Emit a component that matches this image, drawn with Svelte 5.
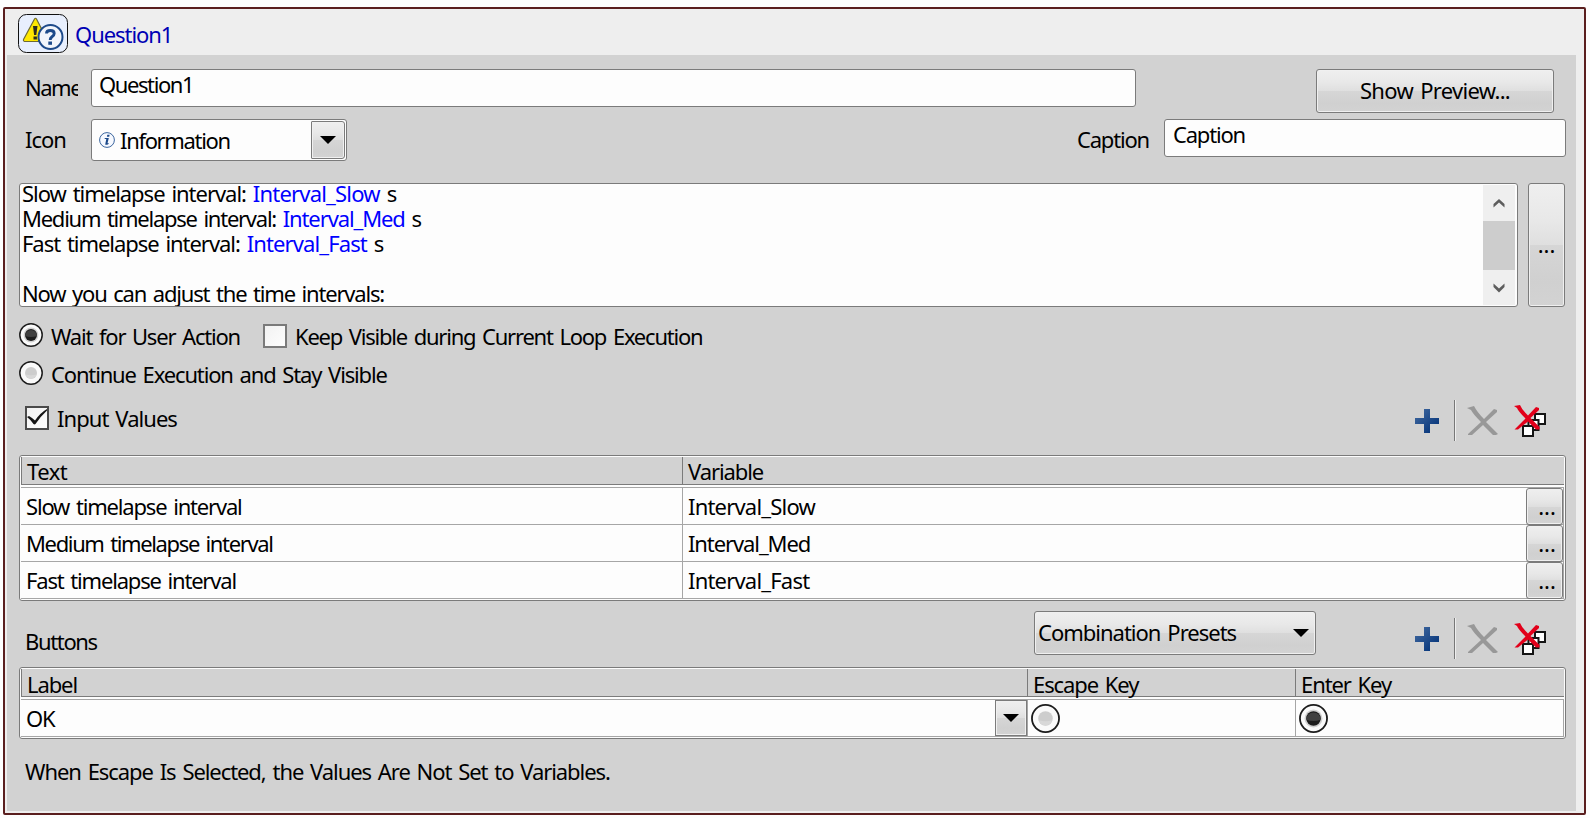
<script>
  const messages = [
    { label: 'Slow timelapse interval: ', variable: 'Interval_Slow', unit: ' s', track: [-1.03, -0.8] },
    { label: 'Medium timelapse interval: ', variable: 'Interval_Med', unit: ' s', track: [-1.25, -1.1] },
    { label: 'Fast timelapse interval: ', variable: 'Interval_Fast', unit: ' s', track: [-1.05, -0.88] }
  ];
  const inputs = [
    { text: 'Slow timelapse interval', variable: 'Interval_Slow', track: [-1.18, -0.8] },
    { text: 'Medium timelapse interval', variable: 'Interval_Med', track: [-1.36, -1.1] },
    { text: 'Fast timelapse interval', variable: 'Interval_Fast', track: [-1.18, -0.8] }
  ];
</script>

{#snippet arrow()}
  <svg class="arrow" width="16" height="8" viewBox="0 0 16 8"><path d="M0 0H16L8 8Z" fill="#000" /></svg>
{/snippet}

{#snippet radio(size, on)}
  <svg class="radio" width={size} height={size} viewBox="0 0 24 24">
    <circle cx="12" cy="12" r="11.2" fill="#fafafa" stroke="#1c1c1c" stroke-width="1.5" />
    {#if on}
      <circle cx="12" cy="12" r="7.4" fill="#d0d0d0" />
      <circle cx="12" cy="12" r="6" fill="#1c1c1c" />
      <path d="M6 13a6 6 0 1 1 12 0q-6 2-12 0z" fill="#404040" />
    {:else}
      <circle cx="12" cy="12" r="6" fill="#cdcdcd" />
      <path d="M6.3 13.5a6 6 0 0 0 11.4 0q-5.700 1.500-11.400 0z" fill="#d8d8d8" />
    {/if}
  </svg>
{/snippet}

{#snippet tools()}
  <div class="tools">
    <svg width="24" height="24" viewBox="0 0 24 24">
      <defs>
        <linearGradient id="plus" x1="0" y1="0" x2="1" y2="1">
          <stop offset="0.2" stop-color="#365f98" /><stop offset="0.8" stop-color="#0b3a7e" />
        </linearGradient>
      </defs>
      <path d="M9 0h6v9h9v6h-9v9H9v-9H0V9h9z" fill="url(#plus)" />
    </svg>
    <i></i>
    <svg class="cross" width="32" height="30" viewBox="0 0 32 30">
      <path d="M0 2L7 0Q10 6 17 13L27 3L30 4V6L19 16L31 28L29 29H26L16 19L5 29H1V28L14 16Q6 8 4 4Z" fill="#989898" />
    </svg>
    <svg class="all" width="33" height="33" viewBox="0 0 33 33">
      <g fill="#fff" stroke="#151515" stroke-width="2">
        <path d="M21 9h10v10H21z" /><path d="M14.500 15h10v10h-10z" /><path d="M9 21h10v10H9z" />
      </g>
      <path d="M0 1L6 0Q8 5 14 10.500L22 2L25 3V5L16.500 13L25.500 22V24.500H22L14 16.500L4 24.500H0.500L11.500 13.500Q4 6 3 3Z" fill="#e2001a" />
    </svg>
  </div>
{/snippet}

<div class="frame">
  <header>
    <svg width="50" height="39" viewBox="0 0 50 39">
      <rect x=".5" y=".5" width="49" height="38" rx="8" fill="#e8effd" stroke="#111" />
      <path d="M16.500 5Q17.500 3.500 18.500 5L29 25.500Q29 27.500 27.500 27.500H6.500Q5 27 5.500 25.500Z" fill="#ffe800" stroke="#6d6a35" stroke-width="1.200" />
      <path d="M15 12h4.500l-1.200 9h-2.200zM15.500 22.500h3.400v3h-3.400z" fill="#2c2c20" />
      <circle cx="32.500" cy="23" r="12" fill="#f2f5fb" stroke="#1d4a8a" stroke-width="2" />
      <path d="M28.500 19.500Q28.500 16.500 32.300 16.500Q36.200 16.500 36.200 19.500Q36.200 21.300 34 22.700Q32.200 24 32.200 26" fill="none" stroke="#1d4a8a" stroke-width="2.900" />
      <rect x="30.300" y="27.500" width="3.700" height="3.300" fill="#1d4a8a" />
    </svg>
    <span>Question1</span>
  </header>

  <main>
    <section class="row name-row">
      <label class="lead" for="name"><span>Name</span></label>
      <div class="field name" id="name">Question1</div>
      <button class="btn preview">Show Preview...</button>
    </section>

    <section class="row icon-row">
      <span class="lead">Icon</span>
      <div class="combo">
        <svg width="16" height="16" viewBox="0 0 16 16">
          <circle cx="8" cy="8" r="7.400" fill="#f6f9ff" stroke="#3b659e" />
          <path d="M8.300 2.800h2.300l-.4 2H7.900zM5.800 6h4l-1.300 5.200 1.200-.3-.2 1Q7.500 13.200 6.200 12.500L7.300 7.100H5.600z" fill="#1d4a8a" />
        </svg>
        <span>Information</span>
        <button class="btn drop">{@render arrow()}</button>
      </div>
      <span class="cap">Caption</span>
      <div class="field caption">Caption</div>
    </section>

    <section class="row message-row">
      <div class="message">
        <div class="lines">
          {#each messages as m}
            <p style:letter-spacing="{m.track[0]}px">{m.label}<b style:letter-spacing="{m.track[1]}px">{m.variable}</b>{m.unit}</p>
          {/each}
          <p>&nbsp;</p>
          <p class="now">Now you can adjust the time intervals:</p>
        </div>
        <div class="scroll">
          <svg width="12" height="10" viewBox="0 0 12 10"><path d="M.5 8.500V5L6 0l5.500 5v3.500L6 3.500z" fill="#5d5d5d" /></svg>
          <div class="thumb"></div>
          <svg width="12" height="10" viewBox="0 0 12 10"><path d="M.5 .5v3.500L6 9.500 11.500 4V.5L6 5.500z" fill="#5d5d5d" /></svg>
        </div>
      </div>
      <button class="btn more">...</button>
    </section>

    <section class="row wait-row">
      {@render radio(24, true)}<span class="wait">Wait for User Action</span>
      <span class="box"></span><span class="keep">Keep Visible during Current Loop Execution</span>
    </section>
    <section class="row stay-row">
      {@render radio(24, false)}<span>Continue Execution and Stay Visible</span>
    </section>

    <section class="row values-row">
      <span class="box checked">
        <svg width="20" height="20" viewBox="0 0 20 20"><path d="M0 9l2-1q3 1.500 6 4.500Q13 5 20 1v1.500Q13 9 8.500 16q-1 .8-2 0Q4 12 0 9z" fill="#161616" /></svg>
      </span>
      <span class="input-values">Input Values</span>
      {@render tools()}
    </section>

    <div class="table values">
      <div class="thead"><span class="text">Text</span><span>Variable</span></div>
      {#each inputs as r}
        <div class="tr">
          <span style:letter-spacing="{r.track[0]}px">{r.text}</span>
          <span style:letter-spacing="{r.track[1]}px">{r.variable}</span>
          <button class="btn dots">...</button>
        </div>
      {/each}
    </div>

    <section class="row buttons-row">
      <span class="title">Buttons</span>
      <button class="btn presets"><span>Combination Presets</span>{@render arrow()}</button>
      {@render tools()}
    </section>

    <div class="table keys">
      <div class="thead"><span>Label</span><span>Escape Key</span><span>Enter Key</span></div>
      <div class="tr">
        <span class="ok">OK<button class="btn pick">{@render arrow()}</button></span>
        <span>{@render radio(29, false)}</span>
        <span>{@render radio(29, true)}</span>
      </div>
    </div>

    <p class="note">When Escape Is Selected, the Values Are Not Set to Variables.</p>
  </main>
</div>

<style>
  :global(body) { background: #fdfdfd; overflow: hidden; }
  * { box-sizing: border-box; }
  .frame {
    width: 1583px; height: 808px; margin: 7px 0 0 3px;
    border: 2px solid #5a1e1e; border-radius: 2px; background: #eee;
    font: 22px/30px "Noto Sans", sans-serif; letter-spacing: -1.1px; word-spacing: 2.2px; color: #000;
    white-space: nowrap;
  }
  svg { display: block; flex: none; }
  p { margin: 0; }
  button { font: inherit; letter-spacing: inherit; word-spacing: inherit; color: inherit; padding: 0; flex: none; }
  header { height: 46px; padding: 5px 0 0 13px; display: flex; }
  header span { margin: 5px 0 0 7px; color: #0000b4; letter-spacing: -1.05px; }
  main { width: 1569px; height: 756px; margin-left: 2px; padding: 14px 10px 0 12px; background: #d2d2d2; }
  .row { display: flex; align-items: flex-start; }
  .btn {
    border: 1px solid #7b7b7b; border-radius: 3px;
    background: linear-gradient(#efefef, #e8e8e8 30%, #dfdfdf 50%, #d6d6d6 50%, #d0d0d0 80%, #d3d3d3);
    box-shadow: inset 0 0 0 1px #f0f0f0;
  }
  .field {
    height: 38px; padding: 0 7px; border: 1px solid #7b7b7b; border-radius: 3px; background: #fdfdfd;
    line-height: 28px; letter-spacing: -1.2px;
  }
  .lead { width: 72px; padding-left: 6px; flex: none; }
  .name-row { height: 50px; }
  .name-row .lead { padding-top: 3px; }
  .lead span { display: block; width: 53px; overflow: hidden; letter-spacing: -1.5px; }
  .name { width: 1045px; letter-spacing: -1.4px; }
  .preview { width: 238px; height: 44px; margin-left: 180px; letter-spacing: -0.7px; padding-bottom: 2px; }
  .icon-row { height: 64px; }
  .icon-row .lead { padding-top: 5px; letter-spacing: -1px; }
  .combo {
    width: 256px; height: 42px; display: flex; align-items: center; padding: 0 1px 0 7px;
    border: 1px solid #7b7b7b; border-radius: 3px; background: #fdfdfd;
  }
  .combo span { margin: -1px auto 0 5px; letter-spacing: -1.33px; }
  .drop { width: 34px; height: 38px; display: grid; place-items: center; border-radius: 1px 3px 3px 1px; }
  .cap { margin: 5px 0 0 730px; width: 87px; letter-spacing: -1.2px; }
  .field.caption { width: 402px; padding-left: 8px; }
  .message-row { height: 140px; }
  .message {
    width: 1499px; height: 124px; display: flex; border: 1px solid #7b7b7b; border-radius: 3px;
    background: #fdfdfd; padding: 1px 2px 1px 2px;
  }
  .lines { flex: 1; overflow: hidden; line-height: 25px; margin-top: -4px; height: 125px; }
  .lines b { font-weight: 400; color: #00f; }
  .now { letter-spacing: -1.2px; }
  .scroll { width: 32px; height: 120px; background: #efefef; display: flex; flex-direction: column; align-items: center; padding: 14px 0 12px; }
  .thumb { width: 32px; height: 49px; margin: 12px 0 13px; background: #cdcdcd; flex: none; }
  .more { width: 37px; height: 124px; margin-left: 10px; letter-spacing: 0; padding-bottom: 2px; }
  .wait-row { height: 38px; }
  .radio + span { margin: -2px 0 0 8px; letter-spacing: -1.15px; }
  .wait-row .radio + span { width: 212px; letter-spacing: -1.2px; }
  .box {
    width: 24px; height: 24px; border: 2px solid #7a7a7a; flex: none;
    background: linear-gradient(135deg, #f2f2f2, #fdfdfd);
  }
  .wait-row .box { margin-top: 1px; }
  .stay-row { height: 44px; }
  .values-row { height: 50px; padding-left: 6px; }
  .box.checked { margin-top: 1px; border-color: #4a4a4a; }
  .box + span { margin-left: 8px; margin-top: -2px; }
  .keep { letter-spacing: -1.22px; }
  .input-values { letter-spacing: -0.95px; }
  .tools { display: flex; margin-left: auto; width: 151px; height: 42px; flex: none; }
  .values-row .tools { margin-top: -5px; }
  .tools > svg:first-child { margin-top: 9px; }
  .tools i { width: 2px; height: 41px; margin-left: 15px; border-left: 1px solid #777; border-right: 1px solid #eee; }
  .cross { margin: 6px 0 0 11px; }
  .all { margin: 5px 0 0 15px; }
  .table { width: 1547px; border: 1px solid #7b7b7b; border-radius: 3px; background: #fdfdfd; padding: 1px 1px 0; }
  .values { height: 146px; }
  .thead { height: 28px; display: flex; background: #d2d2d2; border-bottom: 1px solid #7b7b7b; border-left: 1px solid #7b7b7b; }
  .thead span + span { border-left: 1px solid #7b7b7b; }
  .thead span { padding-left: 5px; line-height: 30px; height: 27px; }
  .thead .text { letter-spacing: -0.5px; }
  .values .thead span { line-height: 28px; }
  .tr { height: 37px; display: flex; border-top: 1px solid #a6a6a6; border-right: 1px solid #a6a6a6; }
  .thead + .tr { margin-top: 2px; }
  .tr:last-child { height: 38px; border-bottom: 1px solid #a6a6a6; }
  .tr > span { padding: 3px 0 0 5px; }
  .tr > span + span { border-left: 1px solid #a6a6a6; }
  .values .tr span:first-child { width: 661px; }
  .values .thead span:first-child { width: 660px; }
  .values .thead span:nth-child(2) { flex: 1; }
  .values .tr span:nth-child(2) { flex: 1; }
  .dots { width: 37px; height: 37px; padding: 0 0 2px 5px; letter-spacing: 0; }
  .buttons-row { height: 66px; padding-top: 10px; }
  .title { width: 1015px; padding: 15px 0 0 6px; letter-spacing: -1.35px; }
  .presets { width: 282px; height: 44px; display: flex; align-items: center; padding: 0 6px 0 3px; justify-content: space-between; letter-spacing: -1px; }
  .presets span { margin-top: -2px; }
  .buttons-row .tools { margin-top: 7px; }
  .keys { height: 72px; }
  .keys .thead span:first-child { width: 1005px; }
  .keys .tr > span:first-child { width: 1006px; }
  .keys span:nth-child(2) { width: 268px; }
  .keys span:nth-child(3) { flex: 1; }
  .tr > .ok { display: flex; justify-content: space-between; line-height: 30px; }
  .pick { width: 32px; height: 36px; margin-top: -3px; display: grid; place-items: center; border-radius: 0; }
  .keys .tr > span + span { padding: 4px 0 0 3px; }
  .note { margin: 17px 0 0 6px; letter-spacing: -1.07px; }
</style>
